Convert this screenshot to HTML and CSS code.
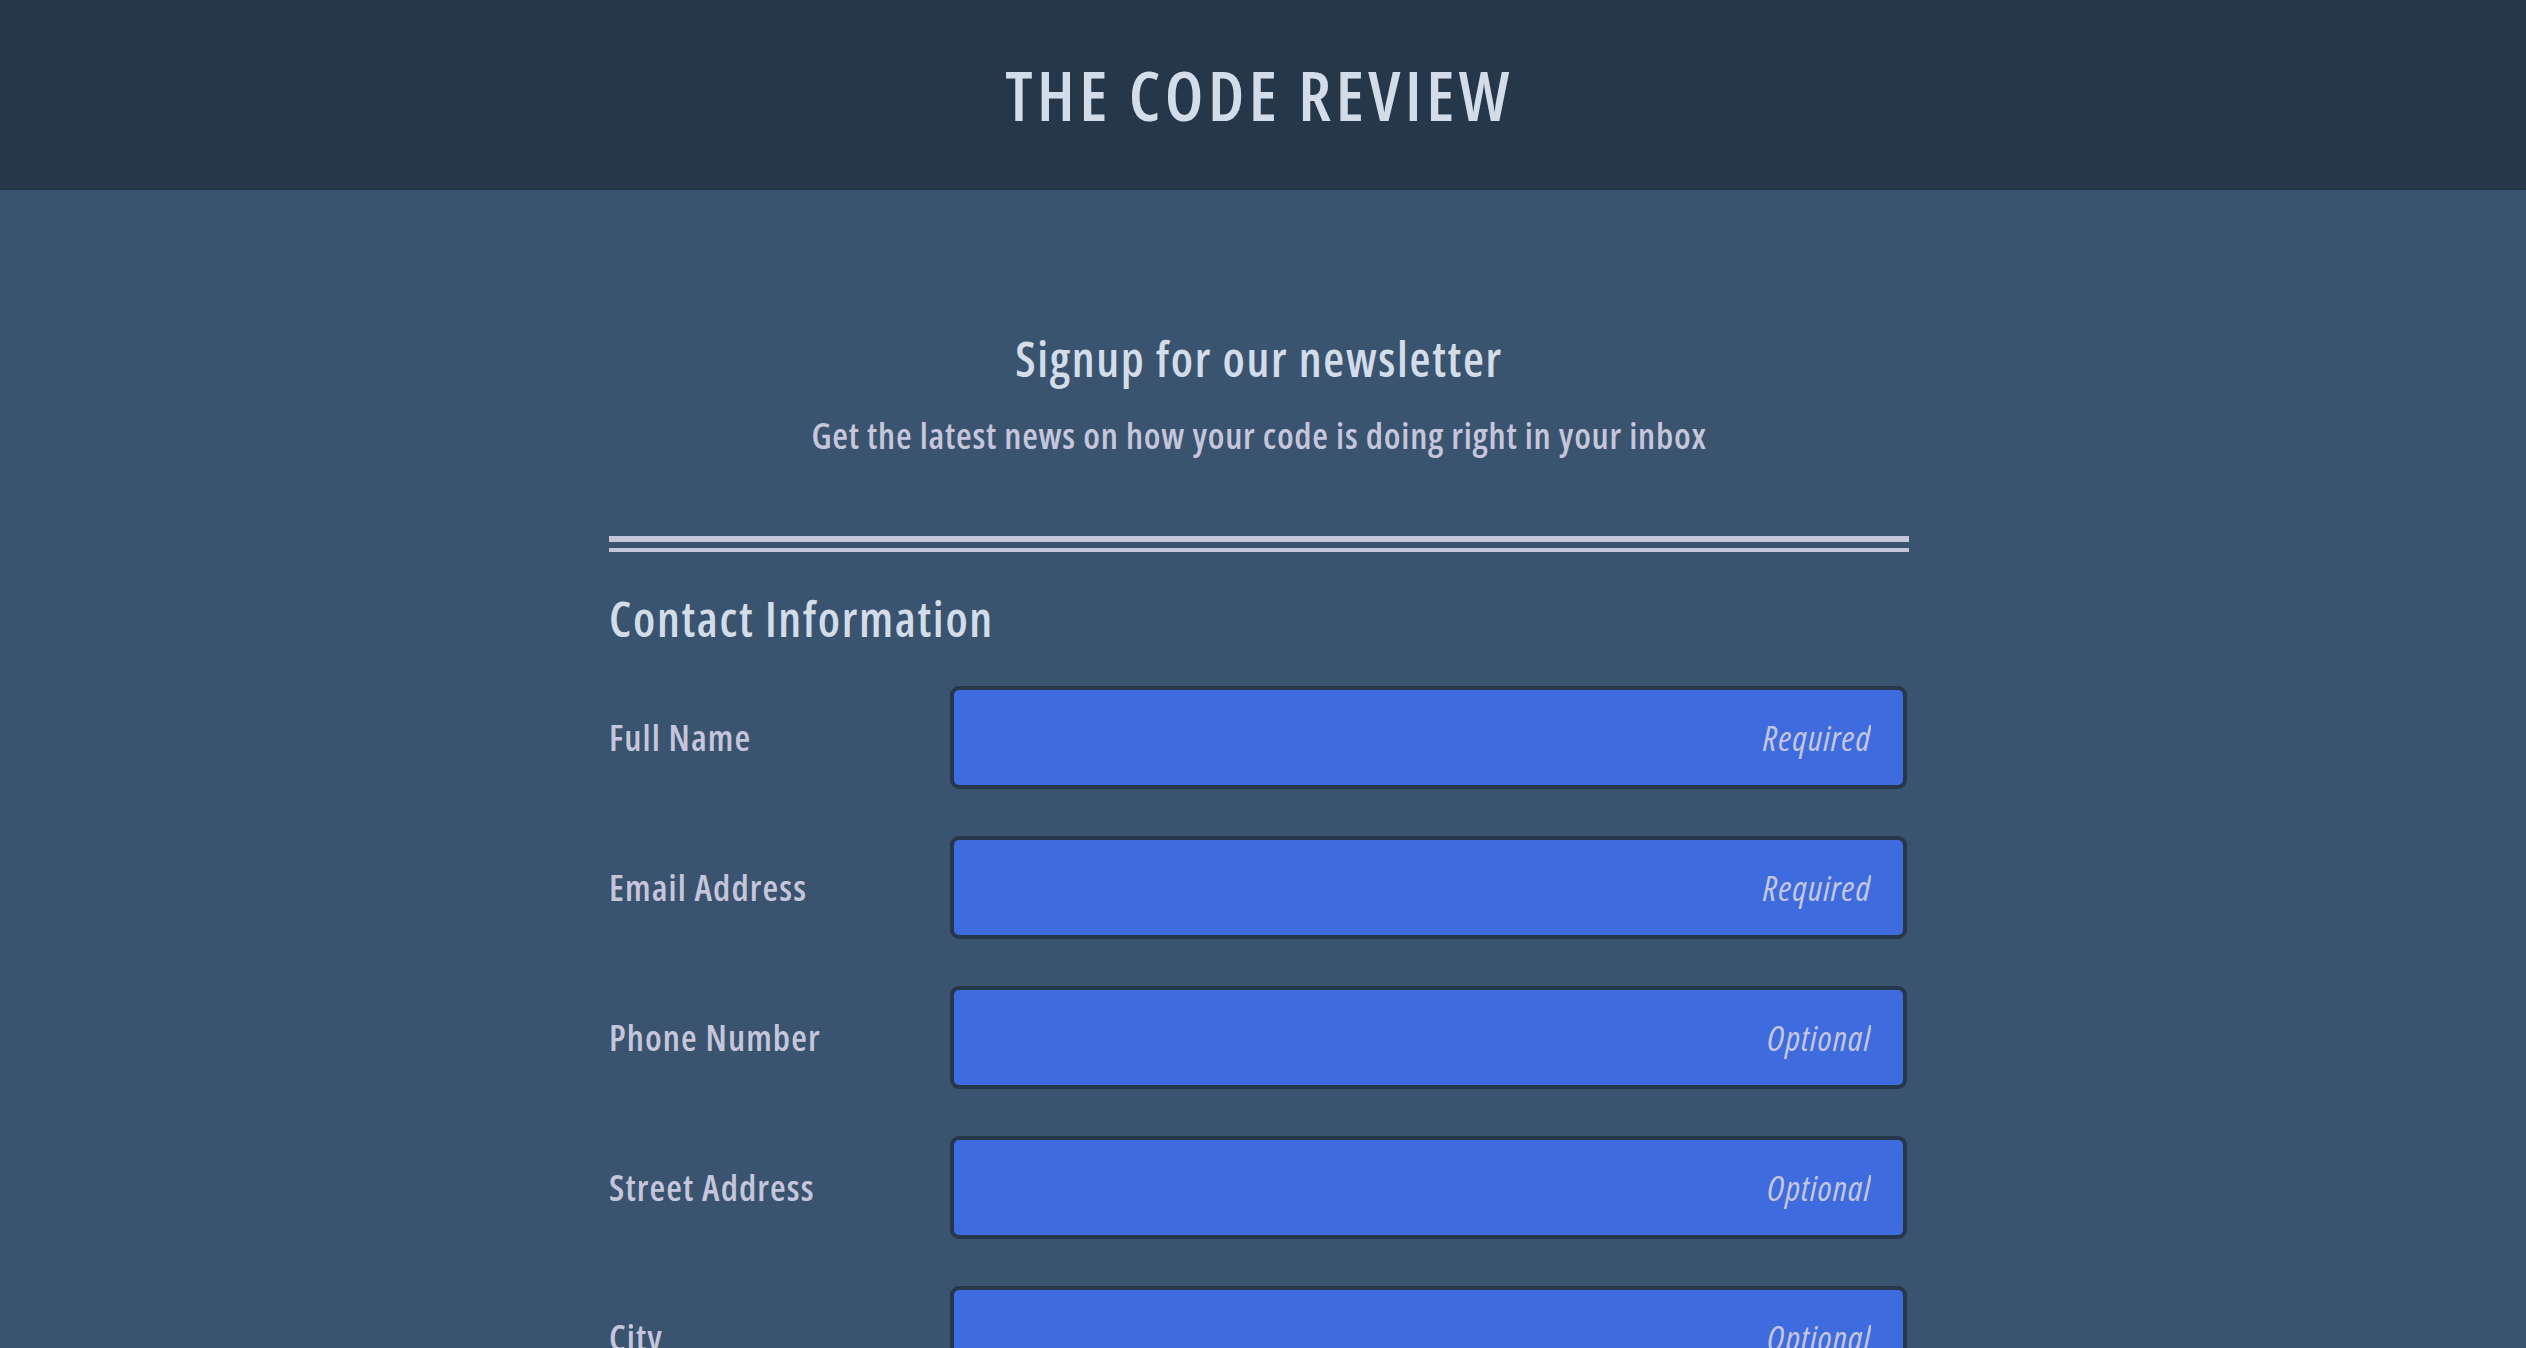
FILE: index.html
```html
<!DOCTYPE html>
<html lang="en">
<head>
<meta charset="utf-8">
<title>The Code Review</title>
<link rel="stylesheet" href="styles.css">
</head>
<body>
<header class="site-header">
  <h1 class="site-title">THE CODE REVIEW</h1>
</header>
<main class="page">
  <section class="intro">
    <h2 class="intro-title">Signup for our newsletter</h2>
    <p class="intro-sub">Get the latest news on how your code is doing right in your inbox</p>
  </section>
  <div class="divider"></div>
  <form class="form">
    <h3 class="form-heading">Contact Information</h3>
    <div class="rows">
      <div class="row">
        <label class="label" for="name">Full Name</label>
        <input class="field" id="name" type="text" placeholder="Required">
      </div>
      <div class="row">
        <label class="label" for="email">Email Address</label>
        <input class="field" id="email" type="email" placeholder="Required">
      </div>
      <div class="row">
        <label class="label" for="phone">Phone Number</label>
        <input class="field" id="phone" type="tel" placeholder="Optional">
      </div>
      <div class="row">
        <label class="label" for="street">Street Address</label>
        <input class="field" id="street" type="text" placeholder="Optional">
      </div>
      <div class="row">
        <label class="label" for="city">City</label>
        <input class="field" id="city" type="text" placeholder="Optional">
      </div>
      <div class="row">
        <label class="label" for="state">State</label>
        <input class="field" id="state" type="text" placeholder="Optional">
      </div>
    </div>
  </form>
</main>
</body>
</html>
```

FILE: styles.css
```css
html, body {
  margin: 0;
  padding: 0;
}

body {
  background: #3a536e;
  font-family: "Open Sans", "Roboto", "DejaVu Sans Condensed", sans-serif;
  font-stretch: 75%;
  color: #c5c6dc;
}

.site-header {
  height: 190px;
  background: #263749;
  display: flex;
  align-items: center;
  justify-content: center;
  box-sizing: border-box;
  border-bottom: 1px solid #22313f;
}

.site-title {
  margin: 0;
  padding-right: 7px;
  font-size: 68px;
  line-height: 68px;
  font-weight: 600;
  letter-spacing: 4.5px;
  color: #d3dde9;
}

.page {
  width: 1300px;
  margin: 0 auto;
  padding: 145px 8px 0 0;
}

.intro {
  text-align: center;
}

.intro-title {
  margin: 0;
  font-size: 48px;
  line-height: 48px;
  font-weight: 600;
  letter-spacing: 1.7px;
  color: #d3dde9;
}

.intro-sub {
  margin: 35px 0 0;
  font-size: 36px;
  line-height: 36px;
  font-weight: 600;
  letter-spacing: 0.75px;
  color: #c5c6dc;
}

.divider {
  margin-top: 82px;
  height: 6px;
  border-top: 6px solid #c5c6dc;
  border-bottom: 4px solid #c5c6dc;
}

.form-heading {
  margin: 43px 0 0;
  font-size: 48px;
  line-height: 48px;
  font-weight: 600;
  letter-spacing: 1.7px;
  color: #d3dde9;
}

.rows {
  margin-top: 43px;
  display: flex;
  flex-direction: column;
  gap: 47px;
}

.row {
  display: flex;
  align-items: center;
  height: 103px;
}

.label {
  width: 341px;
  flex: none;
  font-size: 36px;
  line-height: 36px;
  font-weight: 600;
  letter-spacing: 1.1px;
  color: #c5c6dc;
}

.field {
  width: 957px;
  height: 103px;
  box-sizing: border-box;
  border: 4px solid #263749;
  border-radius: 9px;
  background: #3e6bdd;
  padding: 0 32px 0 24px;
  text-align: right;
  font-family: inherit;
  font-stretch: 75%;
  font-size: 35px;
  font-weight: 400;
  font-style: italic;
  letter-spacing: 1px;
  color: #e8ebf5;
  outline: none;
}

.field::placeholder {
  color: #c5c6dc;
  opacity: 1;
}
```
